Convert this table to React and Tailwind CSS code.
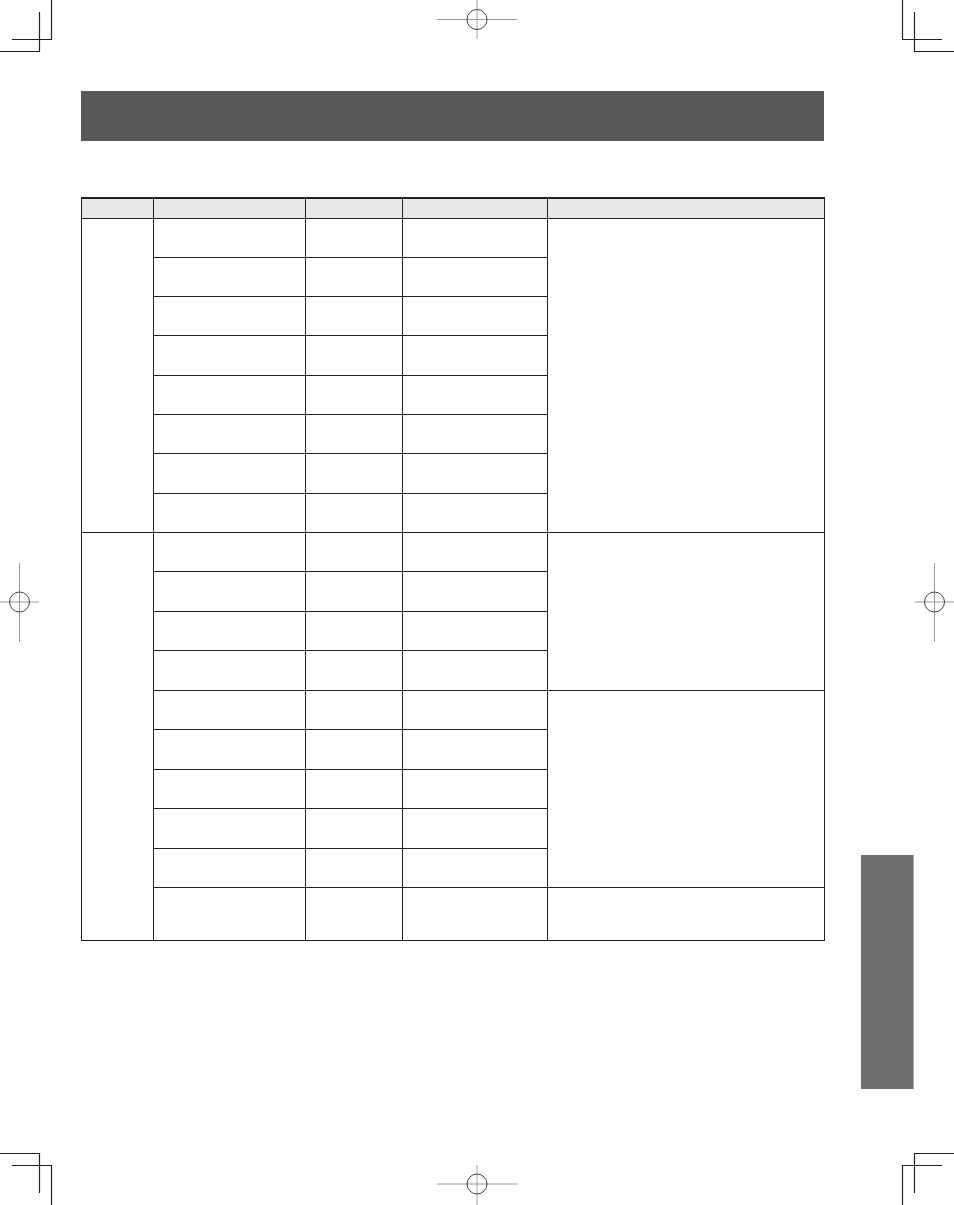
import React from "react";

function PrintMarks() {
  const k = "#231f20";
  const g = "#9a9a9a";
  return (
    <svg className="absolute inset-0 pointer-events-none" width="954" height="1205" viewBox="0 0 954 1205">
      {/* corner crop marks */}
      <g stroke={k} strokeWidth="1.2" fill="none">
        <path d="M51.5 0V39.5H12" />
        <path d="M39.5 12V51.5H0" />
        <path d="M902.5 0V39.5H942" />
        <path d="M914.5 12V51.5H954" />
        <path d="M0 1153.5H39.5V1193" />
        <path d="M12 1165.5H51.5V1205" />
        <path d="M954 1153.5H914.5V1193" />
        <path d="M942 1165.5H902.5V1205" />
      </g>
      {/* registration marks */}
      <g fill="none" strokeWidth="1">
        <path d="M477 0V39" stroke="#d0d0d0" strokeWidth="2" />
        <path d="M437 19.5H517" stroke={g} />
        <circle cx="477" cy="19.5" r="10" stroke="#444" />
        <path d="M477 1165V1205" stroke="#d0d0d0" strokeWidth="2" />
        <path d="M437 1184H517" stroke={g} />
        <circle cx="477" cy="1184" r="10" stroke="#444" />
        <path d="M19.5 563V642" stroke={g} />
        <path d="M0 602H39" stroke={g} />
        <circle cx="19.5" cy="602" r="10" stroke="#444" />
        <path d="M934.5 563V642" stroke={g} />
        <path d="M915 602H954" stroke={g} />
        <circle cx="934.5" cy="602" r="10" stroke="#444" />
      </g>
    </svg>
  );
}

const cell = "border border-[#231f20] p-0";

export default function App() {
  const g1 = [0, 1, 2, 3, 4, 5, 6, 7];
  const g2 = [0, 1, 2, 3, 4, 5, 6, 7, 8, 9];
  return (
    <div className="relative w-[954px] h-[1205px] bg-white overflow-hidden" style={{ fontFamily: '"Liberation Sans", Arial, sans-serif' }}>
      <div className="flex flex-col pt-[91px] pl-[81px]">
        <div className="w-[743px] h-[50px] bg-[#595757]" />
        <table className="mt-[56px] w-[743px] border-collapse table-fixed">
          <colgroup>
            <col className="w-[72px]" />
            <col className="w-[152px]" />
            <col className="w-[97px]" />
            <col className="w-[145px]" />
            <col className="w-[277px]" />
          </colgroup>
          <thead>
            <tr className="h-[20px] bg-[#e8e8e8]">
              <th className={`${cell} border-t-2`} />
              <th className={`${cell} border-t-2`} />
              <th className={`${cell} border-t-2`} />
              <th className={`${cell} border-t-2`} />
              <th className={`${cell} border-t-2`} />
            </tr>
          </thead>
          <tbody>
            {g1.map((i) => (
              <tr key={"a" + i} className="h-[39.3px]">
                {i === 0 && <td className={cell} rowSpan={8} />}
                <td className={cell} />
                <td className={cell} />
                <td className={cell} />
                {i === 0 && <td className={cell} rowSpan={8} />}
              </tr>
            ))}
            {g2.map((i) => (
              <tr key={"b" + i} className={i === 9 ? "h-[52.5px]" : "h-[39.5px]"}>
                {i === 0 && <td className={cell} rowSpan={10} />}
                <td className={cell} />
                <td className={cell} />
                <td className={cell} />
                {i === 0 && <td className={cell} rowSpan={4} />}
                {i === 4 && <td className={cell} rowSpan={5} />}
                {i === 9 && <td className={cell} />}
              </tr>
            ))}
          </tbody>
        </table>
      </div>
      <div className="absolute left-[861px] top-[855px] w-[53px] h-[234px] bg-[#706d6e] border-r border-[#a8a6a7]" />
      <PrintMarks />
    </div>
  );
}
